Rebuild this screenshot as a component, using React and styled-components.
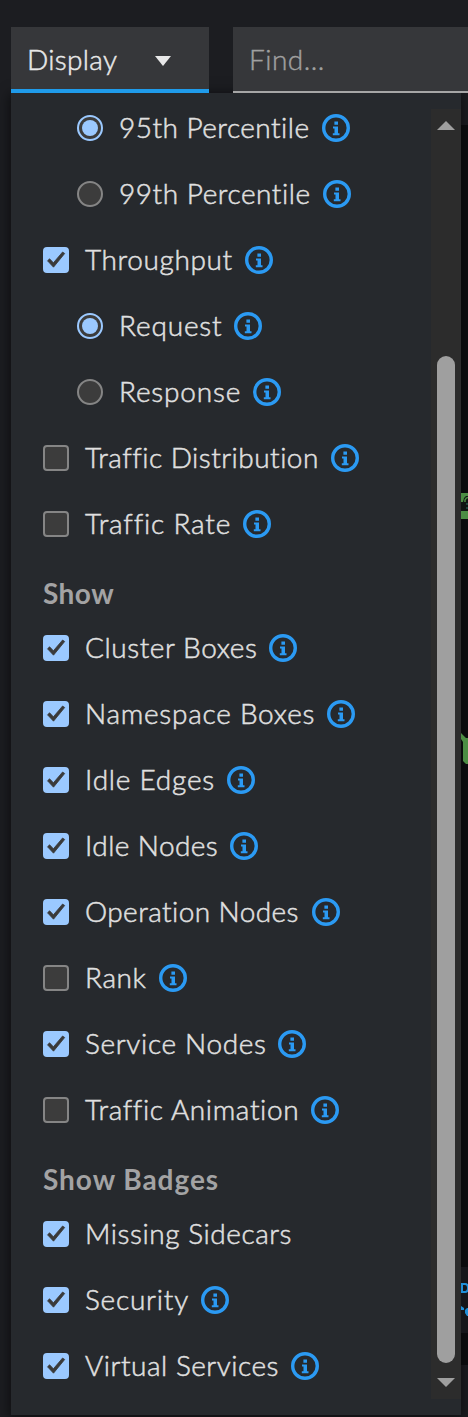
import React from 'react';
import styled, { createGlobalStyle, css } from 'styled-components';

const GlobalStyle = createGlobalStyle`
  *, *::before, *::after { box-sizing: border-box; }
  body {
    margin: 0;
    background: #1b1d21;
    color: #e0e0e0;
    font-family: Lato, "Liberation Sans", sans-serif;
    font-size: 28px;
    font-weight: 300;
    font-variant-ligatures: none;
    overflow: hidden;
  }
`;

const Page = styled.div`
  position: relative;
  width: 468px;
  height: 1417px;
  overflow: hidden;
  display: flex;
  flex-direction: column;
  background:
    linear-gradient(transparent 125px, #0d0e10 125px 1365px, transparent 1365px) right / 14px 100% no-repeat,
    #1c1d21;
`;

const Toolbar = styled.header`
  position: relative;
  z-index: 2;
  display: flex;
  gap: 24px;
  height: 93px;
  padding: 27px 0 0 11px;
`;

const Toggle = styled.button`
  display: flex;
  align-items: center;
  justify-content: space-between;
  width: 198px;
  height: 66px;
  padding: 6px 38px 0 16px;
  border: 0;
  border-bottom: 4px solid #1f9bea;
  background: #36373a;
  color: #e8e8e8;
  font: inherit;
  -webkit-text-stroke: 0.5px;
  letter-spacing: 0.32px;
`;

const ToggleText = styled.span`
  padding-bottom: 4px;
`;

const SearchBox = styled.div`
  display: flex;
  align-items: center;
  flex: 1;
  height: 66px;
  padding: 0 0 0 16px;
  border-bottom: 2px solid #a6a6a6;
  background: #36373a;
  color: #a0a0a0;
  -webkit-text-stroke: 0.4px;
  letter-spacing: 0.5px;
`;

const Menu = styled.main`
  position: relative;
  display: flex;
  width: 450px;
  height: 1322px;
  margin-left: 11px;
  background: #26292d;
  box-shadow: 0 2px 12px 1px rgba(3, 3, 3, 0.6);
`;

const Options = styled.div`
  flex: 1;
  padding: 2px 0 0 32px;
`;

const Heading = styled.h1`
  display: flex;
  align-items: center;
  height: 58px;
  margin: 0;
  padding-top: 14px;
  color: #a3a3a4;
  font-size: 28px;
  font-weight: 700;
  letter-spacing: ${(p) => p.$spacing}px;
`;

const Option = styled.label`
  display: flex;
  align-items: center;
  height: 66px;
  padding-left: ${(p) => (p.$nested ? 34 : 0)}px;
`;

const Control = styled.span`
  display: flex;
  align-items: center;
  justify-content: center;
  flex: none;
  width: 26px;
  height: 26px;
  margin-right: 16px;
  border: 2px solid #858585;
  border-radius: 4px;
  background: #3c3c3c;
  ${(p) => p.$checked && css`
    border-color: #9bc9ff;
    background: #9bc9ff;
  `}
`;

const Radio = styled(Control)`
  border-radius: 50%;
  background: #3c3c3c;
  &::after {
    content: '';
    width: 16px;
    height: 16px;
    flex: none;
    border-radius: 50%;
    background: ${(p) => (p.$checked ? '#9bc9ff' : 'transparent')};
  }
`;

const Label = styled.span`
  flex: none;
  width: ${(p) => p.$width}px;
  margin-right: 12px;
  padding-bottom: 2px;
  white-space: nowrap;
  letter-spacing: ${(p) => p.$spacing}px;
  -webkit-text-stroke: 0.5px;
`;

const Scrollbar = styled.div`
  display: flex;
  flex-direction: column;
  align-items: center;
  width: 30px;
  height: 1290px;
  margin-top: 16px;
  padding: 12px 0;
  background: #2c2c2c;
`;

const Thumb = styled.div`
  width: 18px;
  height: 1007px;
  margin: 226px 0 15px;
  border-radius: 9px;
  background: #9f9f9f;
`;

const Icon = styled.svg`
  display: block;
  flex: none;
`;

const GraphLayer = styled.svg`
  position: absolute;
  z-index: 1;
  top: 0;
  right: 0;
`;

const InfoIcon = () => (
  <Icon width="28" height="28" viewBox="0 0 28 28">
    <circle cx="14" cy="14" r="12.3" fill="none" stroke="#2b9af3" strokeWidth="3.4" />
    <path fill="#2b9af3" d="M12.4 7.4H16V10.8H12.4ZM11 12.4H16V19.2H17.5V21.2H10.8V19.2H12.5V14.4H11Z" />
  </Icon>
);

const CheckIcon = () => (
  <Icon width="22" height="22" viewBox="2 2 22 22">
    <path fill="#3a3a3a" stroke="#3a3a3a" strokeWidth="0.8" strokeLinejoin="round" d="M4.500 13.800L6.600 11.800L10.400 15.800L19.600 5L21.700 6.500L10.500 20.200Z" />
  </Icon>
);

const Arrow = ({ down, width = 18, height = 9, color = '#9f9f9f' }) => (
  <Icon width={width} height={height} viewBox="0 0 18 9" preserveAspectRatio="none">
    <path fill={color} d={down ? 'M0 0H18L9 9Z' : 'M9 0L18 9H0Z'} />
  </Icon>
);

const groups = [
  {
    items: [
      { text: '95th Percentile', width: 191, spacing: 0.47, radio: true, on: true },
      { text: '99th Percentile', width: 192, spacing: 0.54, radio: true },
      { text: 'Throughput', width: 148, spacing: 0.62, on: true },
      { text: 'Request', width: 103, spacing: 0.85, radio: true, on: true },
      { text: 'Response', width: 122, spacing: 0.82, radio: true },
      { text: 'Traffic Distribution', width: 234, spacing: 0.47 },
      { text: 'Traffic Rate', width: 146, spacing: 0.82 },
    ],
  },
  {
    title: 'Show',
    spacing: 0.45,
    items: [
      { text: 'Cluster Boxes', width: 172, spacing: 0.58, on: true },
      { text: 'Namespace Boxes', width: 230, spacing: 0.75, on: true },
      { text: 'Idle Edges', width: 130, spacing: 0.77, on: true },
      { text: 'Idle Nodes', width: 133, spacing: 0.42, on: true },
      { text: 'Operation Nodes', width: 215, spacing: 0.42, on: true },
      { text: 'Rank', width: 62, spacing: 0.6 },
      { text: 'Service Nodes', width: 181, spacing: 0.66, on: true },
      { text: 'Traffic Animation', width: 214, spacing: 0.62 },
    ],
  },
  {
    title: 'Show Badges',
    spacing: 0.95,
    items: [
      { text: 'Missing Sidecars', width: 207, spacing: 0.55, on: true, plain: true },
      { text: 'Security', width: 104, spacing: 0.77, on: true },
      { text: 'Virtual Services', width: 194, spacing: 0.51, on: true },
    ],
  },
];

export default function App() {
  return (
    <Page>
      <GlobalStyle />
      <GraphLayer width="7" height="1417" viewBox="0 0 7 1417">
        <path fill="#4c8d43" d="M0 493H7V519H0Z" />
        <path fill="#101412" d="M0 502H2L3 498L5 496H7V511H0Z" />
        <path fill="none" stroke="#4c8d43" strokeWidth="1.500" d="M4 502V500Q5 497.500 7 497.500" />
        <path fill="#20463d" d="M5 503H7V505H5ZM5 507H7V509H5Z" />
        <path fill="#4c8d43" d="M0 733L5 738H7V764H5L2 761V742L0 739Z" />
        <path fill="#15161a" d="M0 1267H7V1333H0Z" />
        <path fill="none" stroke="#1f8fd8" strokeWidth="2" d="M1 1293V1284H4Q7 1284 7 1288Q7 1292 4 1292H1" />
        <path fill="#1f8fd8" d="M0 1306L3 1308V1310H0ZM7 1308H6L4 1310V1313L6 1316H7Z" />
      </GraphLayer>
      <Toolbar>
        <Toggle>
          <ToggleText>Display</ToggleText>
          <Arrow down width={16} height={10} color="#e8e8e8" />
        </Toggle>
        <SearchBox>Find...</SearchBox>
      </Toolbar>
      <Menu>
        <Options>
          {groups.map((group, i) => (
            <React.Fragment key={i}>
              {group.title && <Heading $spacing={group.spacing}>{group.title}</Heading>}
              {group.items.map((item) => (
                <Option key={item.text} $nested={item.radio}>
                  {item.radio ? (
                    <Radio $checked={item.on} />
                  ) : (
                    <Control $checked={item.on}>{item.on && <CheckIcon />}</Control>
                  )}
                  <Label $width={item.width} $spacing={item.spacing}>{item.text}</Label>
                  {!item.plain && <InfoIcon />}
                </Option>
              ))}
            </React.Fragment>
          ))}
        </Options>
        <Scrollbar>
          <Arrow />
          <Thumb />
          <Arrow down />
        </Scrollbar>
      </Menu>
    </Page>
  );
}
